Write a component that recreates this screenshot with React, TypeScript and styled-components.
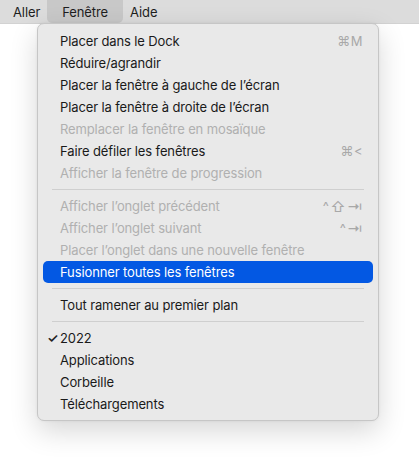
import React from "react";
import styled, { createGlobalStyle } from "styled-components";

const Global = createGlobalStyle`
  html, body { margin: 0; padding: 0; background: #ffffff; }
  body { font-family: Inter, "Noto Sans", "Liberation Sans", sans-serif; -webkit-font-smoothing: antialiased; }
`;

const Page = styled.div`
  position: relative;
  width: 419px;
  height: 464px;
  background: #ffffff;
  overflow: hidden;
`;

const MenuBar = styled.div`
  display: flex;
  align-items: stretch;
  height: 23px;
  padding-left: 6px;
  background: #dcdcdc;
  border-bottom: 1px solid #d2d2d2;
  box-sizing: content-box;
`;

const BarItem = styled.div<{ $active?: boolean }>`
  display: flex;
  align-items: center;
  padding: 0 ${(p) => (p.$active ? "15px" : "7px")};
  font-size: 13px;
  color: #1e1e1e;
  background: ${(p) => (p.$active ? "#c8c8c8" : "transparent")};
  border-radius: 0 0 5px 5px;
  letter-spacing: -0.1px;
`;

const Menu = styled.div`
  position: absolute;
  left: 37px;
  top: 23px;
  width: 340px;
  padding: 6px 0 5px;
  background: #e9e9e9;
  border: 1px solid #c6c6c6;
  border-radius: 7px;
  box-shadow: 0 10px 28px rgba(0, 0, 0, 0.16), 0 0 3px rgba(0, 0, 0, 0.06);
  display: flex;
  flex-direction: column;
`;

const Row = styled.div<{ $disabled?: boolean; $selected?: boolean }>`
  position: relative;
  display: flex;
  align-items: center;
  height: 22px;
  margin: 0 5px;
  padding: 0 10px 0 17px;
  border-radius: 5px;
  font-size: 13px;
  letter-spacing: -0.12px;
  color: ${(p) => (p.$selected ? "#ffffff" : p.$disabled ? "#b0b0b0" : "#1a1a1a")};
  background: ${(p) => (p.$selected ? "#0358e3" : "transparent")};
`;

const Label = styled.span`
  flex: 1;
  white-space: nowrap;
`;

const Shortcut = styled.span`
  display: flex;
  align-items: center;
  gap: 1px;
  color: #a8a8a8;
  font-size: 13px;
  letter-spacing: 0.5px;
  white-space: nowrap;
`;

const Glyph = styled.span`
  font-size: 15px;
  line-height: 1;
`;

const Check = styled.span`
  position: absolute;
  left: 4px;
  top: 0;
  height: 22px;
  display: flex;
  align-items: center;
  font-size: 13px;
  font-weight: 600;
  color: #1f1f1f;
`;

const Separator = styled.div`
  height: 1px;
  margin: 5px 14px 5px 14px;
  background: #cfcfcf;
`;

type Item =
  | { sep: true }
  | { sep?: false; label: string; disabled?: boolean; selected?: boolean; shortcut?: React.ReactNode; checked?: boolean };

const items: Item[] = [
  { label: "Placer dans le Dock", shortcut: "⌘M" },
  { label: "Réduire/agrandir" },
  { label: "Placer la fenêtre à gauche de l’écran" },
  { label: "Placer la fenêtre à droite de l’écran" },
  { label: "Remplacer la fenêtre en mosaïque", disabled: true },
  { label: "Faire défiler les fenêtres", shortcut: "⌘<" },
  { label: "Afficher la fenêtre de progression", disabled: true },
  { sep: true },
  {
    label: "Afficher l’onglet précédent",
    disabled: true,
    shortcut: (
      <>
        <span>^</span>
        <Glyph>⇧</Glyph>
        <Glyph>⇥</Glyph>
      </>
    ),
  },
  {
    label: "Afficher l’onglet suivant",
    disabled: true,
    shortcut: (
      <>
        <span>^</span>
        <Glyph>⇥</Glyph>
      </>
    ),
  },
  { label: "Placer l’onglet dans une nouvelle fenêtre", disabled: true },
  { label: "Fusionner toutes les fenêtres", selected: true },
  { sep: true },
  { label: "Tout ramener au premier plan" },
  { sep: true },
  { label: "2022", checked: true },
  { label: "Applications" },
  { label: "Corbeille" },
  { label: "Téléchargements" },
];

export default function App() {
  return (
    <Page>
      <Global />
      <MenuBar>
        <BarItem>Aller</BarItem>
        <BarItem $active>Fenêtre</BarItem>
        <BarItem>Aide</BarItem>
      </MenuBar>
      <Menu>
        {items.map((it, i) =>
          it.sep ? (
            <Separator key={i} />
          ) : (
            <Row key={i} $disabled={it.disabled} $selected={it.selected}>
              {it.checked && <Check>✓</Check>}
              <Label>{it.label}</Label>
              {it.shortcut && <Shortcut>{it.shortcut}</Shortcut>}
            </Row>
          )
        )}
      </Menu>
    </Page>
  );
}
